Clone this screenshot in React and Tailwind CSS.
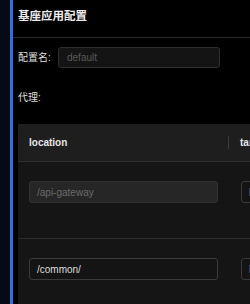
import React from "react";

const font = { fontFamily: '"Liberation Sans", "Noto Sans CJK SC", sans-serif' };

function Cell({ value, disabled, muted }) {
  let tone = "bg-[#141414] border-[#3a3a3a] text-[#dcdcdc]";
  if (disabled) tone = "bg-[#262626] border-[#333] text-[#6b6b6b]";
  else if (muted) tone = "bg-[#141414] border-[#3a3a3a] text-[#9a9a9a]";
  return (
    <div
      className={
        "h-[22px] rounded-[3px] border flex items-center px-[7px] text-[10px] whitespace-nowrap overflow-hidden " +
        tone
      }
    >
      {value}
    </div>
  );
}

function Row({ location, target, disabled, last }) {
  return (
    <div
      className={
        "flex h-[77px] items-start pt-[19px] " + (last ? "" : "border-b border-[#2c2c2c]")
      }
    >
      <div className="w-[211px] shrink-0 pl-[11px] pr-[11px]">
        <Cell value={location} disabled={disabled} />
      </div>
      <div className="w-[120px] shrink-0 pl-[12px]">
        <Cell value={target} muted />
      </div>
    </div>
  );
}

export default function App() {
  return (
    <div className="w-[250px] h-[304px] overflow-hidden flex bg-black" style={font}>
      <div className="w-[10px] shrink-0 bg-[#050a14]" />
      <div className="w-[3px] shrink-0 bg-[#2f6fe0]" />
      <div className="flex-1 min-w-0 flex flex-col">
        <div className="h-[38px] shrink-0 flex items-center pl-[5px] pb-[4px] border-b border-[#2a2a2a]">
          <span className="text-[11.5px] font-bold text-[#ededed]">基座应用配置</span>
        </div>
        <div className="pl-[5px] pt-[9px] flex flex-col">
          <div className="flex items-center h-[21px]">
            <span className="w-[40px] shrink-0 text-[10px] text-[#dedede]">配置名:</span>
            <div className="w-[162px] h-[21px] rounded-[3px] border border-[#2e2e2e] bg-[#141414] flex items-center pl-[8px] text-[10px] text-[#5a5a5a]">
              default
            </div>
          </div>
          <div className="h-[18px] mt-[20px] flex items-center text-[10px] text-[#dedede]">代理:</div>
          <div className="mt-[18px] w-[340px] bg-[#151515]">
            <div className="h-[38px] flex items-center bg-[#1e1e1e] border-b border-[#2e2e2e]">
              <div className="w-[211px] shrink-0 pl-[11px] relative h-full flex items-center">
                <span className="text-[10px] font-bold text-[#e6e6e6]">location</span>
                <span className="absolute right-0 top-[12px] h-[13px] w-px bg-[#3a3a3a]" />
              </div>
              <div className="pl-[11px] text-[10px] font-bold text-[#e6e6e6]">target</div>
            </div>
            <Row location="/api-gateway" target="http://gateway" disabled />
            <Row location="/common/" target="http://common" last />
          </div>
        </div>
      </div>
    </div>
  );
}
